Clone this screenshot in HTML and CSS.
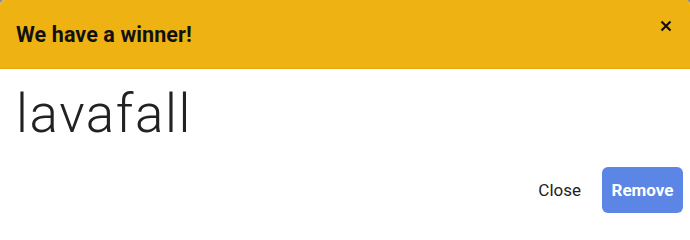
FILE: index.html
```html
<!DOCTYPE html>
<html>
<head>
<meta charset="utf-8">
<link rel="stylesheet" href="styles.css">
</head>
<body>
<div class="backdrop">
<div class="modal">
  <div class="header">
    <h2 class="title">We have a winner!</h2>
    <button class="x" aria-label="Close">
      <svg width="12" height="12" viewBox="0 0 12 12"><path d="M1.5 1.5 L10.5 10.5 M10.5 1.5 L1.5 10.5" stroke="#111" stroke-width="2.2" fill="none"/></svg>
    </button>
  </div>
  <div class="body">
    <div class="winner">lavafall</div>
  </div>
  <div class="footer">
    <button class="btn btn-close">Close</button>
    <button class="btn btn-remove">Remove</button>
  </div>
</div>
</div>
</body>
</html>
```
FILE: styles.css
```css
html, body {
  margin: 0;
  padding: 0;
  background: #fff;
}
.backdrop {
  width: 690px;
  height: 218px;
  background: #8a8a8a;
}
.modal {
  width: 690px;
  height: 218px;
  background: #fff;
  border-radius: 5px 5px 0 0;
  overflow: hidden;
  display: flex;
  flex-direction: column;
  font-family: Roboto, "Liberation Sans", sans-serif;
}
.header {
  height: 69px;
  box-sizing: border-box;
  background: #efb213;
  border-bottom: 1px solid #e8a80c;
  display: flex;
  align-items: center;
  justify-content: space-between;
  padding: 1px 16px 0 16px;
}
.title {
  margin: 0;
  font-size: 21.5px;
  font-weight: 700;
  color: #111;
  letter-spacing: 0.1px;
}
.x {
  background: none;
  border: 0;
  padding: 0;
  width: 13px;
  height: 13px;
  display: flex;
  align-items: center;
  justify-content: center;
  margin-right: 2px;
  margin-top: -18px;
}
.body {
  padding: 13px 16px 0 16px;
  flex: 1;
}
.winner {
  font-size: 53px;
  font-weight: 300;
  color: #222;
  line-height: 64px;
  letter-spacing: 1.6px;
}
.footer {
  display: flex;
  justify-content: flex-end;
  align-items: center;
  gap: 9px;
  padding: 0 7px 5px 0;
}
.btn {
  font-family: Roboto, "Liberation Sans", sans-serif;
  font-size: 17px;
  border: 0;
  border-radius: 6px;
  height: 46px;
  padding: 0 12px;
  cursor: pointer;
}
.btn-close {
  background: transparent;
  color: #222;
  font-weight: 400;
}
.btn-remove {
  background: #5b86e5;
  color: #fff;
  font-weight: 700;
  width: 81px;
  padding: 0;
}
```
